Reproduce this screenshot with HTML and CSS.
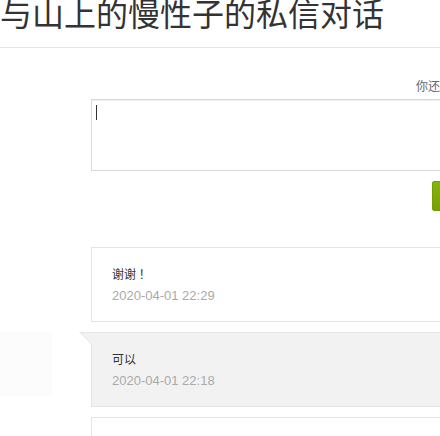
FILE: index.html
```html
<!DOCTYPE html>
<html lang="zh-CN">
<head>
<meta charset="utf-8">
<title>私信对话</title>
<link rel="stylesheet" href="styles.css">
</head>
<body>
<div class="page">
  <h1 class="title">与山上的慢性子的私信对话</h1>
  <div class="composer">
    <div class="hint">你还可以输入300字</div>
    <div class="input"><span class="caret"></span></div>
    <div class="actions"><button class="send">发送</button></div>
  </div>
  <ul class="messages">
    <li class="msg">
      <div class="side"></div>
      <div class="bubble">
        <p class="text">谢谢 ！</p>
        <p class="time">2020-04-01 22:29</p>
      </div>
    </li>
    <li class="msg other">
      <div class="side"><div class="avatar"></div></div>
      <div class="bubble">
        <p class="text">可以</p>
        <p class="time">2020-04-01 22:18</p>
      </div>
    </li>
    <li class="msg">
      <div class="side"></div>
      <div class="bubble">
        <p class="text">好的</p>
        <p class="time">2020-04-01 22:10</p>
      </div>
    </li>
  </ul>
</div>
</body>
</html>
```
FILE: styles.css
```css
html, body {
  margin: 0;
  padding: 0;
  background: #fff;
  overflow: hidden;
}
body {
  font-family: "Noto Sans CJK SC", "Liberation Sans", sans-serif;
  color: #333;
  font-size: 12px;
}
.page {
  width: 760px;
}
.title {
  margin: -4px 0 0 0;
  padding: 0 0 19px 0;
  font-size: 32px;
  line-height: 32px;
  font-weight: 400;
  color: #333;
  border-bottom: 1px solid #e6e6e6;
  white-space: nowrap;
}
.composer {
  padding-left: 91px;
  padding-top: 29px;
}
.hint {
  padding-left: 325px;
  line-height: 18px;
  color: #666;
  white-space: nowrap;
  margin-bottom: 4px;
}
.input {
  width: 600px;
  height: 72px;
  border: 1px solid #dadada;
  box-shadow: inset 0 1px 1px #eee;
  padding: 5px 4px;
  box-sizing: border-box;
}
.caret {
  display: block;
  width: 1px;
  height: 15px;
  background: #333;
}
.actions {
  padding-left: 341px;
  margin-top: 10px;
}
.send {
  display: block;
  width: 80px;
  height: 30px;
  border: 1px solid #72a004;
  border-radius: 2px;
  background: linear-gradient(#86b40c, #779f08);
  color: #fff;
  font-family: inherit;
  font-size: 14px;
  padding: 0;
}
.messages {
  list-style: none;
  margin: 36px 0 0 0;
  padding: 0;
}
.msg {
  display: flex;
  margin-bottom: 10px;
}
.side {
  width: 91px;
  flex: none;
}
.avatar {
  width: 52px;
  height: 64px;
  background: #fcfcfc;
}
.bubble {
  position: relative;
  width: 600px;
  border: 1px solid #e5e5e5;
  background: #fff;
  padding: 15px 20px 14px;
}
.other .bubble {
  background: #f2f2f2;
}
.other .bubble::before {
  content: "";
  position: absolute;
  left: -13px;
  top: -1px;
  width: 0;
  height: 0;
  border-top: 13px solid #e5e5e5;
  border-left: 13px solid transparent;
}
.other .bubble::after {
  content: "";
  position: absolute;
  left: -11px;
  top: 0;
  width: 0;
  height: 0;
  border-top: 12px solid #f2f2f2;
  border-left: 12px solid transparent;
}
.text, .time {
  margin: 0;
  line-height: 22px;
  font-size: 12px;
}
.text {
  color: #333;
}
.time {
  color: #aaa;
  font-family: "Liberation Sans", "Noto Sans CJK SC", sans-serif;
  font-size: 13px;
}
```
